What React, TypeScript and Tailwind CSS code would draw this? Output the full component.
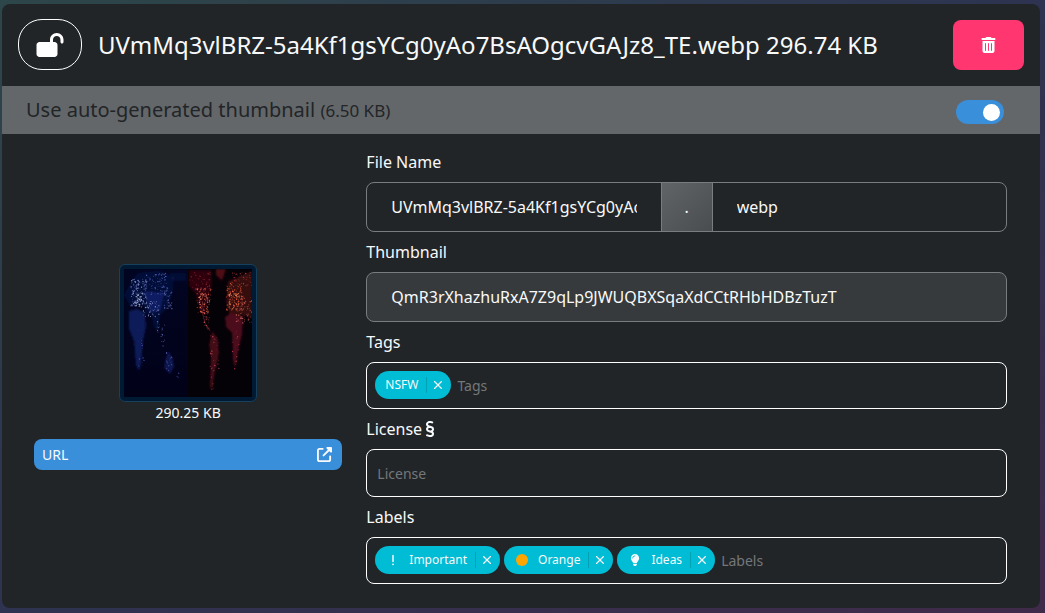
import { useState } from 'react';
import type { ReactNode } from 'react';
import { X } from 'lucide-react';
import {
  FaCircle,
  FaExclamation,
  FaLightbulb,
  FaLockOpen,
  FaSection,
  FaTrashCan,
  FaUpRightFromSquare,
} from 'react-icons/fa6';

interface Chip {
  name: string;
  icon?: ReactNode;
}

const initialTags: Chip[] = [{ name: 'NSFW' }];

const initialLabels: Chip[] = [
  { name: 'Important', icon: <FaExclamation /> },
  { name: 'Orange', icon: <FaCircle className="text-[#ffa500]" /> },
  { name: 'Ideas', icon: <FaLightbulb /> },
];

// x, y, width, height, count, color of each cluster of city lights
const clusters: [number, number, number, number, number, string][] = [
  [7, 10, 16, 28, 130, '#8f9be0'],
  [10, 24, 9, 14, 40, '#d8dcff'],
  [20, 4, 24, 22, 90, '#5d6cc8'],
  [19, 32, 16, 16, 50, '#b9bdf0'],
  [40, 20, 8, 20, 40, '#6c7ad0'],
  [33, 42, 3, 22, 14, '#6c7ad0'],
  [37, 56, 4, 22, 14, '#6c7ad0'],
  [14, 58, 6, 42, 14, '#4c62d8'],
  [42, 84, 6, 18, 12, '#6c7ad0'],
  [52, 100, 4, 16, 4, '#3a4190'],
  [66, 3, 22, 18, 50, '#a03038'],
  [73, 19, 14, 26, 100, '#f06a50'],
  [75, 24, 9, 16, 30, '#ffb08a'],
  [80, 44, 6, 16, 22, '#d05a60'],
  [86, 66, 9, 34, 30, '#d04a58'],
  [86, 96, 4, 26, 10, '#b03848'],
  [102, 14, 18, 28, 130, '#f05a3c'],
  [105, 24, 10, 16, 40, '#ff9a60'],
  [112, 28, 16, 26, 80, '#f0746a'],
  [108, 3, 20, 14, 50, '#b83a3a'],
  [108, 60, 7, 42, 16, '#c03850'],
];

function noise(n: number) {
  const v = Math.sin(n * 12.9898) * 43758.5453;
  return v - Math.floor(v);
}

function Lights() {
  return (
    <>
      {clusters.map(([x, y, w, h, count, color], c) =>
        Array.from({ length: count }, (_, i) => {
          const seed = c * 200 + i + 1;
          return (
            <circle
              key={seed}
              cx={x + noise(seed) * w}
              cy={y + noise(seed + 0.37) * h}
              r={0.25 + noise(seed + 0.71) * 0.5}
              fill={color}
              opacity={0.35 + noise(seed + 0.53) * 0.65}
            />
          );
        }),
      )}
    </>
  );
}

function Preview() {
  return (
    <div className="rounded-md border border-[#17405c] bg-[#001a33] p-1">
      <svg viewBox="0 0 128 128" className="size-32" role="img" aria-label="Preview">
        <defs>
          <linearGradient id="night-blue" x1="0" y1="0" x2="0" y2="1">
            <stop offset="0" stopColor="#020522" />
            <stop offset="1" stopColor="#010118" />
          </linearGradient>
          <filter id="soft">
            <feGaussianBlur stdDeviation="1.2" />
          </filter>
        </defs>
        <rect width="64" height="128" fill="url(#night-blue)" />
        <rect x="64" width="64" height="128" fill="#040107" />
        <g filter="url(#soft)" fill="#091545">
          <path d="M8 12 14 4l22-2 14 6-2 18-6 14-6 6-2 16-4-4-3-14-5 1-3-10-12 3-7-12z" opacity=".7" />
          <path d="M5 42l8-2 8 4 1 14-3 14-2 22-2 8-3-6-2-24-5-12z" fill="#0c1a58" />
          <path d="M20 22l20 2-4 18-10 2z" fill="#0f1d62" />
          <path d="M42 88l3-6 4 8 1 8-4 7-6-6z" fill="#0e1650" />
          <path d="M46 4h16v8H48z" opacity=".5" />
        </g>
        <g filter="url(#soft)" fill="#2e060d">
          <path d="M65 1h22l1 14-3 12-4 18-5-2-4-18-7-8z" />
          <path d="M92 0h10l-4 12-6-6z" fill="#500c16" />
          <path d="M88 62l6 8 1 14-4 18-3 20-2-4 1-30-2-12z" fill="#420916" />
          <path d="M104 12l24-10v48l-8-4-14 2-4-16z" fill="#36070c" />
          <path d="M101 48l6-4 12 4-1 18-4 16-3 18-2-10-1-26-6-6z" fill="#4c0a1a" />
        </g>
        <path d="M78 42l3 12 5 8" stroke="#5a1620" strokeWidth="1" fill="none" />
        <Lights />
      </svg>
    </div>
  );
}

interface FieldProps {
  id: string;
  label: string;
  icon?: ReactNode;
  children: ReactNode;
}

function Field({ id, label, icon, children }: FieldProps) {
  return (
    <div className="flex flex-col gap-2">
      <label htmlFor={id} className="flex items-center gap-1">
        {label}
        {icon}
      </label>
      {children}
    </div>
  );
}

interface ChipInputProps {
  id: string;
  placeholder: string;
  initial: Chip[];
}

function ChipInput({ id, placeholder, initial }: ChipInputProps) {
  const [chips, setChips] = useState(initial);

  return (
    <div className="flex flex-wrap items-center gap-1 rounded-lg border border-white px-2 pt-2 pb-[9px]">
      {chips.map(chip => (
        <span key={chip.name} className="flex h-7 items-center rounded-full bg-[#00bcd4] pl-[10px] text-xs">
          {chip.icon && <span className="mr-2 flex w-4 justify-center">{chip.icon}</span>}
          <span className="pr-2">{chip.name}</span>
          <button
            type="button"
            aria-label={`Remove ${chip.name}`}
            onClick={() => setChips(chips.filter(c => c !== chip))}
            className="flex h-4 w-[25px] items-center border-l border-[#00a0b5] pl-1"
          >
            <X size={14} strokeWidth={2} />
          </button>
        </span>
      ))}
      <input
        id={id}
        type="text"
        placeholder={placeholder}
        className="h-7 min-w-0 flex-1 bg-transparent px-0.5 text-sm outline-none placeholder:text-[#74777a]"
      />
    </div>
  );
}

export default function App() {
  const [auto, setAuto] = useState(true);

  return (
    <div className="min-h-screen bg-linear-to-br from-[#2d4649] via-[#2d3350] to-[#402a4a] pt-1 pr-[5px] pb-[5px] pl-0.5 font-['Noto_Sans',sans-serif] text-base text-[#f8f9fa]">
      <div className="overflow-hidden rounded-lg bg-[#212528]">
        <header className="flex items-center gap-4 px-4 pt-[15px] pb-4">
          <button
            type="button"
            aria-label="Unlock"
            className="flex h-[51px] w-16 shrink-0 items-center justify-center rounded-3xl border border-white text-white"
          >
            <FaLockOpen className="h-6 w-7" />
          </button>
          <h1 className="min-w-0 flex-1 truncate text-2xl">
            UVmMq3vlBRZ-5a4Kf1gsYCg0yAo7BsAOgcvGAJz8_TE.webp 296.74 KB
          </h1>
          <button
            type="button"
            aria-label="Delete"
            className="flex h-[50px] w-[71px] shrink-0 items-center justify-center rounded-lg bg-[#ff3670] text-white"
          >
            <FaTrashCan className="h-4 w-[15px]" />
          </button>
        </header>

        <div className="flex h-12 items-center justify-between bg-[#646769] pr-9 pl-6 text-[#212528]">
          <label htmlFor="auto-thumbnail" className="text-xl">
            Use auto-generated thumbnail <span className="text-[17px]">(6.50 KB)</span>
          </label>
          <input
            id="auto-thumbnail"
            type="checkbox"
            role="switch"
            checked={auto}
            onChange={e => setAuto(e.target.checked)}
            className="mt-1 flex h-6 w-12 appearance-none items-center rounded-full bg-[#212528] px-1 before:size-[17px] before:rounded-full before:bg-white checked:justify-end checked:bg-[#3a8fdb]"
          />
        </div>

        <div className="pt-4 pr-[33px] pb-6 pl-8">
          <div className="-mx-3 flex">
            <div className="flex w-1/3 flex-col items-center justify-center px-3">
              <Preview />
              <p className="mt-px text-sm">290.25 KB</p>
              <a
                href="#url"
                className="mt-4 flex h-[31px] w-full items-center justify-between rounded-lg bg-[#3a8fdb] pr-[10px] pl-2 text-sm"
              >
                URL
                <FaUpRightFromSquare className="size-[15px]" />
              </a>
            </div>

            <form className="flex w-2/3 flex-col gap-2 px-3">
              <Field id="file-name" label="File Name">
                <div className="flex h-[50px] overflow-hidden rounded-lg border border-[#7a7d80]">
                  <input
                    id="file-name"
                    type="text"
                    defaultValue="UVmMq3vlBRZ-5a4Kf1gsYCg0yAo7BsAOgcvGAJz8_TE"
                    className="w-0 flex-1 bg-transparent px-6 outline-none"
                  />
                  <span className="flex w-[52px] items-center justify-center border-x border-[#7a7d80] bg-linear-to-br from-[#616466] to-[#4a4d50]">
                    .
                  </span>
                  <input
                    type="text"
                    aria-label="Extension"
                    defaultValue="webp"
                    className="w-0 flex-1 bg-transparent px-6 outline-none"
                  />
                </div>
              </Field>

              <Field id="thumbnail" label="Thumbnail">
                <input
                  id="thumbnail"
                  type="text"
                  readOnly
                  value="QmR3rXhazhuRxA7Z9qLp9JWUQBXSqaXdCCtRHbHDBzTuzT"
                  className="h-[50px] w-full rounded-lg border border-[#7a7d80] bg-[#373a3c] px-6 outline-none"
                />
              </Field>

              <Field id="tags" label="Tags">
                <ChipInput id="tags" placeholder="Tags" initial={initialTags} />
              </Field>

              <Field id="license" label="License" icon={<FaSection className="h-4 w-2" />}>
                <input
                  id="license"
                  type="text"
                  placeholder="License"
                  className="h-12 w-full rounded-lg border border-white bg-transparent px-[10px] text-sm outline-none placeholder:text-[#74777a]"
                />
              </Field>

              <Field id="labels" label="Labels">
                <ChipInput id="labels" placeholder="Labels" initial={initialLabels} />
              </Field>
            </form>
          </div>
        </div>
      </div>
    </div>
  );
}
